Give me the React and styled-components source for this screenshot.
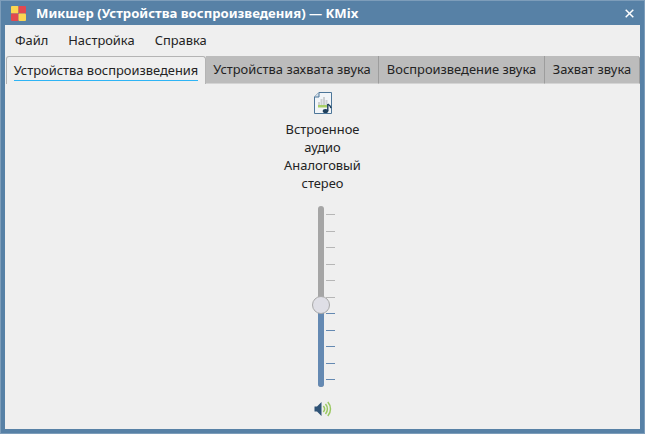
import React from 'react';
import styled, { createGlobalStyle } from 'styled-components';

const Global = createGlobalStyle`
  html, body { margin: 0; padding: 0; background: #5781a6; }
  body { font-family: "Noto Sans", sans-serif; font-size: 12.9px; color: #232323; }
`;
const Window = styled.div`
  width: 645px; height: 434px; box-sizing: border-box;
  display: flex; flex-direction: column;
  background: #5781a6;
  border: 1px solid #7d9dba;
  overflow: hidden;
`;
const TitleBar = styled.div`
  height: 24px; flex: none; display: flex; align-items: center;
  padding: 0 10px; color: #fff; font-weight: 700; font-size: 13.15px;
`;
const AppLogo = styled.svg`width: 15px; height: 15px; flex: none; margin-right: 10px;`;
const Title = styled.span`flex: 1; white-space: nowrap;`;
const CloseIcon = styled.svg`width: 9px; height: 9px; flex: none;`;
const Body = styled.div`
  flex: 1; margin: 0 4px 4px; background: #efefef;
  display: flex; flex-direction: column; min-height: 0;
`;
const MenuBar = styled.div`
  height: 31px; flex: none; display: flex; align-items: center; padding: 0 0 1px 10px; box-sizing: border-box; gap: 20px;
`;
const TabBar = styled.div`display: flex; height: 28px; flex: none; padding: 0 2px 0 1px;`;
const Tab = styled.div`
  box-sizing: border-box; height: 28px; width: ${p => p.$w}px; flex: none;
  display: flex; justify-content: center; align-items: center; position: relative;
  white-space: nowrap; padding-bottom: 1px;
  background: ${p => p.$active ? '#efefef' : '#bcbcbc'};
  border: 1px solid #b4b4b4;
  border-width: ${p => p.$active ? '1px 1px 0 1px' : '0 1px 1px 0'};
  border-radius: ${p => p.$active ? '3px 3px 0 0' : p.$last ? '0 3px 0 0' : '0'};
  border-right-color: ${p => p.$active ? '#b4b4b4' : '#9d9d9d'};
  border-bottom-color: #d4d4d4;
`;
const TabLine = styled.span`
  position: absolute; left: 7px; right: 7px; bottom: 3px; height: 1px; background: #2eb4f5;
`;
const Strip = styled.div`
  flex: 1; display: flex; flex-direction: column; align-items: center; min-height: 0; padding-top: 7px;
`;
const DeviceIcon = styled.svg`width: 24px; height: 24px; flex: none;`;
const Label = styled.div`
  margin-top: 5px; text-align: center; line-height: 18px; width: 100px;
`;
const Slider = styled.div`
  position: relative; margin: 14px 4px 0 0; width: 40px; height: 181px; flex: none;
  display: flex; justify-content: center;
`;
const Track = styled.div`
  width: 6px; height: 100%; border-radius: 3px; overflow: hidden; display: flex; flex-direction: column;
  background: #a5a5a5;
  &::after { content: ""; margin-top: ${p => p.$top}px; height: 100%; background: #6489b2; }
`;
const Ticks = styled.div`
  position: absolute; left: 25px; top: 8px; width: 9px; height: 166px;
  display: flex; flex-direction: column; justify-content: space-between;
`;
const Tick = styled.span`height: 1px; background: ${p => p.$on ? '#6489b2' : '#b6b6b6'};`;
const Knob = styled.div`
  position: absolute; left: 11px; top: 90px; width: 18px; height: 18px; box-sizing: border-box;
  border-radius: 50%; background: #dfdfe6; border: 1.5px solid #a9a9a9;
`;
const SpeakerIcon = styled.svg`width: 18px; height: 16px; flex: none; margin: 14px 0 0 0;`;

const items = ['Файл', 'Настройка', 'Справка'];
const tabs = [
  ['Устройства воспроизведения', 200], ['Устройства захвата звука', 173],
  ['Воспроизведение звука', 166], ['Захват звука', 95],
];

export default function App() {
  return (
    <Window>
      <Global />
      <TitleBar>
        <AppLogo viewBox="0 0 15 15">
          <rect width="7.5" height="7.5" rx="1" fill="#fbd651" />
          <rect x="7.5" width="7.5" height="7.5" rx="1" fill="#e2484f" />
          <rect y="7.5" width="7.5" height="7.5" rx="1" fill="#e2484f" />
          <rect x="7.5" y="7.5" width="7.5" height="7.5" rx="1" fill="#fbd651" />
        </AppLogo>
        <Title>Микшер (Устройства воспроизведения) — KMix</Title>
        <CloseIcon viewBox="0 0 9 9"><path d="M.7.7l7.6 7.6M8.3.7L.7 8.3" stroke="#fff" strokeWidth="1.5" /></CloseIcon>
      </TitleBar>
      <Body>
        <MenuBar>{items.map(i => <span key={i}>{i}</span>)}</MenuBar>
        <TabBar>
          {tabs.map(([t, w], n) => (
            <Tab key={t} $w={w} $active={n === 0} $last={n === 3}>{t}{n === 0 && <TabLine />}</Tab>
          ))}
        </TabBar>
        <Strip>
          <DeviceIcon viewBox="0 0 24 24">
            <path d="M8 1.500h12.500v21h-17v-16.500z" fill="#f2f5f8" stroke="#4d7699" />
            <path d="M8 1.500v4.500h-4.500" fill="#d6e0e9" stroke="#4d7699" />
            <path d="M7 11h2v4H7zM9.500 8h2v7h-2zM12 6h2v9h-2zM14.500 9h2v6h-2z" fill="#cdd0d2" />
            <path d="M7 14h9.500v2.500H7z" fill="#a8d066" />
            <path d="M16.800 13v7" stroke="#1e3f5c" strokeWidth="1.400" />
            <ellipse cx="14.500" cy="20" rx="2.800" ry="2.100" fill="#1e3f5c" />
            <path d="M16.800 13.200c2 1 3 2.300 3.200 4" stroke="#1e3f5c" strokeWidth="1.400" fill="none" />
          </DeviceIcon>
          <Label>Встроенное<br />аудио<br />Аналоговый<br />стерео</Label>
          <Slider>
            <Track $top={98} />
            <Ticks>{Array.from({ length: 11 }, (_, i) => <Tick key={i} $on={i > 5} />)}</Ticks>
            <Knob />
          </Slider>
          <SpeakerIcon viewBox="0 0 18 16">
            <path d="M.500 5.500h2.500l4.500-4.500v14l-4.500-4.500H.500z" fill="#2f5376" />
            <path d="M9.300 5a4.500 4.500 0 010 6M11.500 3a7.500 7.500 0 010 10M13.800 1a10.500 10.500 0 010 14" fill="none" stroke="#9ac860" strokeWidth="1.500" />
          </SpeakerIcon>
        </Strip>
      </Body>
    </Window>
  );
}
